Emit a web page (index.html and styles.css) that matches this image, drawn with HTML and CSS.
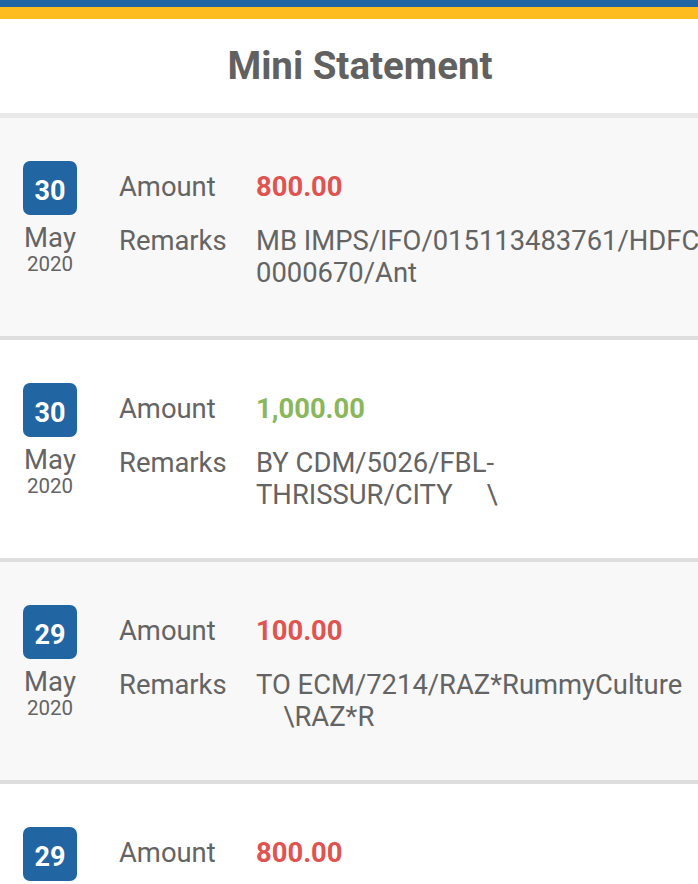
FILE: index.html
```html
<!DOCTYPE html>
<html>
<head>
<meta charset="utf-8">
<link rel="stylesheet" href="styles.css">
</head>
<body>
<div class="bar-blue"></div>
<div class="bar-yellow"></div>
<header class="header"><h1 class="title">Mini Statement</h1></header>
<div class="sep-top"></div>
<main class="list">
  <section class="row alt">
    <div class="date"><div class="day">30</div><div class="month">May</div><div class="year">2020</div></div>
    <div class="details">
      <div class="label">Amount</div><div class="value debit">800.00</div>
      <div class="label">Remarks</div><div class="value remark">MB IMPS/IFO/015113483761/HDFC
0000670/Ant</div>
    </div>
  </section>
  <section class="row">
    <div class="date"><div class="day">30</div><div class="month">May</div><div class="year">2020</div></div>
    <div class="details">
      <div class="label">Amount</div><div class="value credit">1,000.00</div>
      <div class="label">Remarks</div><div class="value remark">BY CDM/5026/FBL-
THRISSUR/CITY     \</div>
    </div>
  </section>
  <section class="row alt">
    <div class="date"><div class="day">29</div><div class="month">May</div><div class="year">2020</div></div>
    <div class="details">
      <div class="label">Amount</div><div class="value debit">100.00</div>
      <div class="label">Remarks</div><div class="value remark">TO ECM/7214/RAZ*RummyCulture
    \RAZ*R</div>
    </div>
  </section>
  <section class="row">
    <div class="date"><div class="day">29</div><div class="month">May</div><div class="year">2020</div></div>
    <div class="details">
      <div class="label">Amount</div><div class="value debit">800.00</div>
      <div class="label">Remarks</div><div class="value remark">TO ECM/7214/RAZ*RummyCulture</div>
    </div>
  </section>
</main>
</body>
</html>
```
FILE: styles.css
```css
* { box-sizing: border-box; }
html, body { margin: 0; padding: 0; }
body {
  font-family: Roboto, "Liberation Sans", sans-serif;
  background: #ffffff;
  color: #646464;
  overflow: hidden;
  width: 698px;
  height: 884px;
}
.bar-blue { height: 7px; background: #2165a3; }
.bar-yellow { height: 12px; background: #febc1e; }
.header {
  height: 94px;
  display: flex;
  align-items: center;
  justify-content: center;
  padding-left: 22px;
  background: #fff;
}
.title {
  margin: 0;
  font-size: 38.5px;
  line-height: 46px;
  font-weight: 700;
  color: #616161;
}
.sep-top { height: 5px; background: #e9e9e9; }
.row {
  display: flex;
  height: 222px;
  padding: 43px 0 0 23px;
  background: #ffffff;
  border-bottom: 4px solid #dedede;
  overflow: hidden;
}
.row.alt { background: #f8f8f8; }
.date {
  width: 54px;
  flex: none;
  display: flex;
  flex-direction: column;
  align-items: center;
}
.day {
  width: 54px;
  height: 54px;
  border-radius: 7px;
  background: #2165a3;
  color: #fff;
  font-weight: 700;
  font-size: 27px;
  line-height: 32px;
  display: flex;
  align-items: center;
  justify-content: center;
  padding-top: 6px;
}
.month { font-size: 27.5px; line-height: 30px; margin-top: 8px; color: #646464; }
.year { font-size: 20.5px; line-height: 20px; margin-top: 1px; color: #646464; }
.details {
  margin-left: 42px;
  padding-top: 10px;
  display: grid;
  grid-template-columns: 137px auto;
  row-gap: 22px;
  align-content: start;
  font-size: 27.4px;
  line-height: 32px;
}
.label { color: #646464; white-space: nowrap; }
.value { white-space: pre; }
.debit { color: #df5350; font-weight: 700; }
.credit { color: #8ab75b; font-weight: 700; }
.remark { color: #646464; }
```
